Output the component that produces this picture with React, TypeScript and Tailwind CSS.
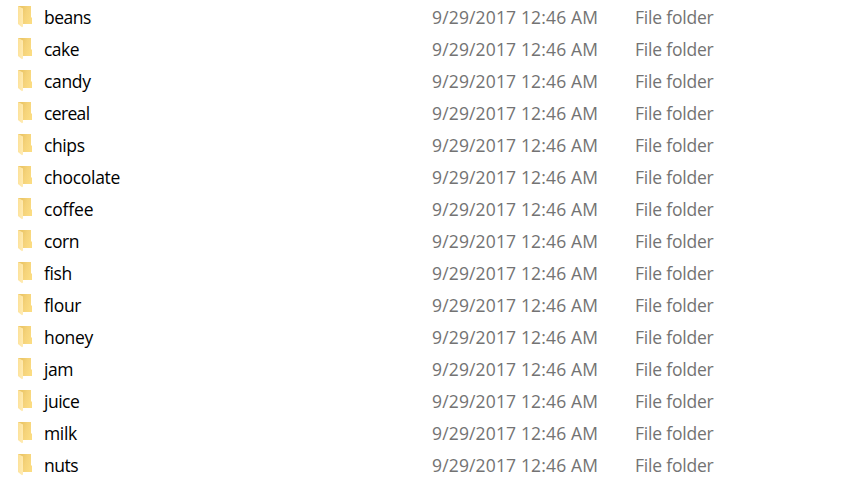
const names = [
  { name: 'beans', spacing: 'tracking-[-0.5px]' },
  { name: 'cake', spacing: 'tracking-[-0.55px]' },
  { name: 'candy', spacing: 'tracking-[-0.35px]' },
  { name: 'cereal', spacing: 'tracking-[-0.65px]' },
  { name: 'chips', spacing: 'tracking-[-0.4px]' },
  { name: 'chocolate', spacing: 'tracking-[-0.3px]' },
  { name: 'coffee', spacing: 'tracking-[-0.15px]' },
  { name: 'corn', spacing: 'tracking-[-0.4px]' },
  { name: 'fish', spacing: 'tracking-[-0.35px]' },
  { name: 'flour', spacing: 'tracking-[-0.3px]' },
  { name: 'honey', spacing: 'tracking-[-0.35px]' },
  { name: 'jam', spacing: 'tracking-[-0.5px]' },
  { name: 'juice', spacing: 'tracking-[-0.5px]' },
  { name: 'milk', spacing: 'tracking-[-0.35px]' },
  { name: 'nuts', spacing: 'tracking-[-0.5px]' },
];

function FolderIcon() {
  return (
    <svg className="mt-1.5 h-[22px] w-[14px] shrink-0" viewBox="0 0 14 22" aria-hidden="true">
      <defs>
        <linearGradient id="back" x1="0.2" x2="1" y1="0.3" y2="0.6">
          <stop offset="0" stopColor="#ecc768" />
          <stop offset="0.45" stopColor="#f5d37a" />
          <stop offset="1" stopColor="#fbdc82" />
        </linearGradient>
        <linearGradient id="flap" x1="0" x2="1" y1="0" y2="0.4">
          <stop offset="0" stopColor="#fce096" />
          <stop offset="1" stopColor="#ffeab0" />
        </linearGradient>
      </defs>
      <path d="M0 0H13V11L14 12V18H0Z" fill="url(#back)" />
      <path d="M0 0L5 2.5V20.5L4 21.2L0 18Z" fill="url(#flap)" />
    </svg>
  );
}

export default function App() {
  return (
    <main className="h-[481px] w-[843px] overflow-hidden bg-white pl-[18px] font-['Open_Sans','Noto_Sans',sans-serif] text-[17.5px] leading-8">
      {names.map(({ name, spacing }) => (
        <div key={name} className="flex h-8 whitespace-nowrap">
          <FolderIcon />
          <span className={`ml-3 mt-px w-[388px] shrink-0 text-black ${spacing}`}>{name}</span>
          <span className="mt-px w-[203px] shrink-0 tracking-[0.15px] text-[#737373]">9/29/2017 12:46 AM</span>
          <span className="mt-px tracking-[-0.2px] text-[#737373]">File folder</span>
        </div>
      ))}
    </main>
  );
}
